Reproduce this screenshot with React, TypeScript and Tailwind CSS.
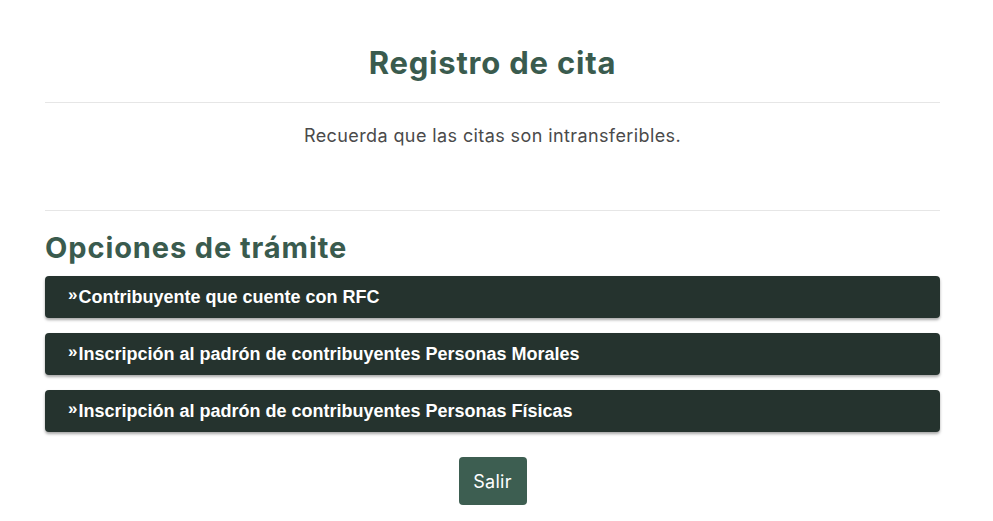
import React from "react";

const items = [
  "Contribuyente que cuente con RFC",
  "Inscripción al padrón de contribuyentes Personas Morales",
  "Inscripción al padrón de contribuyentes Personas Físicas",
];

export default function App() {
  return (
    <div className="min-h-[521px] bg-white">
      <div className="ml-[45px] w-[895px] pt-[41px]">
        <h1 className="text-center text-[31px] leading-[44px] font-bold tracking-[0.8px] text-[#3a5b4e] [font-family:Inter,sans-serif]">
          Registro de cita
        </h1>
        <div className="mt-[17px] h-px bg-[#e6e6e6]" />
        <p className="mt-[20px] text-center text-[18px] leading-[26px] tracking-[0.4px] text-[#4a4a4a] [font-family:Inter,sans-serif]">
          Recuerda que las citas son intransferibles.
        </p>
        <div className="mt-[61px] h-px bg-[#e6e6e6]" />
        <h2 className="mt-[18px] text-[29px] leading-[38px] font-bold tracking-[0.9px] text-[#3a5b4e] [font-family:Inter,sans-serif]">
          Opciones de trámite
        </h2>
        <div className="mt-[9px] flex flex-col gap-[15px]">
          {items.map((t) => (
            <div
              key={t}
              className="flex h-[42px] items-center rounded-[4px] bg-[#25332e] pl-[23px] text-[18px] font-bold text-white shadow-[0_2px_3px_rgba(0,0,0,0.35)] [font-family:'Liberation_Sans',Arial,sans-serif]"
            >
              <span className="mr-[1px] text-[17px] leading-none relative top-[-3px]">»</span>
              {t}
            </div>
          ))}
        </div>
        <div className="mt-[25px] flex justify-center">
          <button className="h-[48px] w-[68px] rounded-[4px] bg-[#3d5e51] text-[18px] tracking-[0.3px] text-white [font-family:Inter,sans-serif]">
            Salir
          </button>
        </div>
      </div>
    </div>
  );
}
